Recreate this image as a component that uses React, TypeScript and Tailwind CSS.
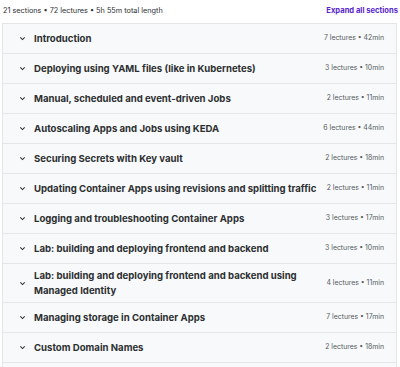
const SECTIONS: { title: string; meta: string }[] = [
  { title: "Introduction", meta: "7 lectures • 42min" },
  { title: "Deploying using YAML files (like in Kubernetes)", meta: "3 lectures • 10min" },
  { title: "Manual, scheduled and event-driven Jobs", meta: "2 lectures • 11min" },
  { title: "Autoscaling Apps and Jobs using KEDA", meta: "6 lectures • 44min" },
  { title: "Securing Secrets with Key vault", meta: "2 lectures • 18min" },
  { title: "Updating Container Apps using revisions and splitting traffic", meta: "2 lectures • 11min" },
  { title: "Logging and troubleshooting Container Apps", meta: "3 lectures • 17min" },
  { title: "Lab: building and deploying frontend and backend", meta: "3 lectures • 10min" },
  { title: "Lab: building and deploying frontend and backend using Managed Identity", meta: "4 lectures • 11min" },
  { title: "Managing storage in Container Apps", meta: "7 lectures • 17min" },
  { title: "Custom Domain Names", meta: "2 lectures • 18min" },
  { title: "Monitoring Container Apps", meta: "3 lectures • 12min" },
];

function Chevron() {
  return (
    <svg width="7" height="7" viewBox="0 0 8 8" className="flex-shrink-0 text-[#2d2f31]">
      <polyline points="1.5,2.8 4,5.2 6.5,2.8" fill="none" stroke="currentColor" strokeWidth="1.2" />
    </svg>
  );
}

export default function App() {
  return (
    <div className="w-[400px] h-[367px] overflow-hidden bg-white font-['Inter','Liberation_Sans',sans-serif] text-[#2d2f31]">
      {/* Summary */}
      <div className="flex items-center justify-between pl-[3px] pr-[2px] h-[23px] pb-[1px]">
        <span className="text-[7.3px] text-[#2d2f31]">21 sections • 72 lectures • 5h 55m total length</span>
        <span className="text-[7.6px] font-bold text-[#5624d0]">Expand all sections</span>
      </div>

      {/* Curriculum */}
      <div className="ml-[2px] w-[395px] border border-[#e4e6e8] border-b-0">
        {SECTIONS.map((s) => (
          <div
            key={s.title}
            className="flex items-center bg-[#f7f9fa] border-b border-[#e4e6e8] min-h-[30px] py-[4px] pl-[16px] pr-[12px]"
          >
            <Chevron />
            <div className="ml-[8px] flex-1 min-w-0 pr-[1px] text-[9.6px] font-bold leading-[15px] text-[#2d2f31]">
              {s.title}
            </div>
            <span className="w-[62px] flex-shrink-0 text-right text-[6.9px] text-[#565a5d] whitespace-nowrap">{s.meta}</span>
          </div>
        ))}
      </div>
    </div>
  );
}
